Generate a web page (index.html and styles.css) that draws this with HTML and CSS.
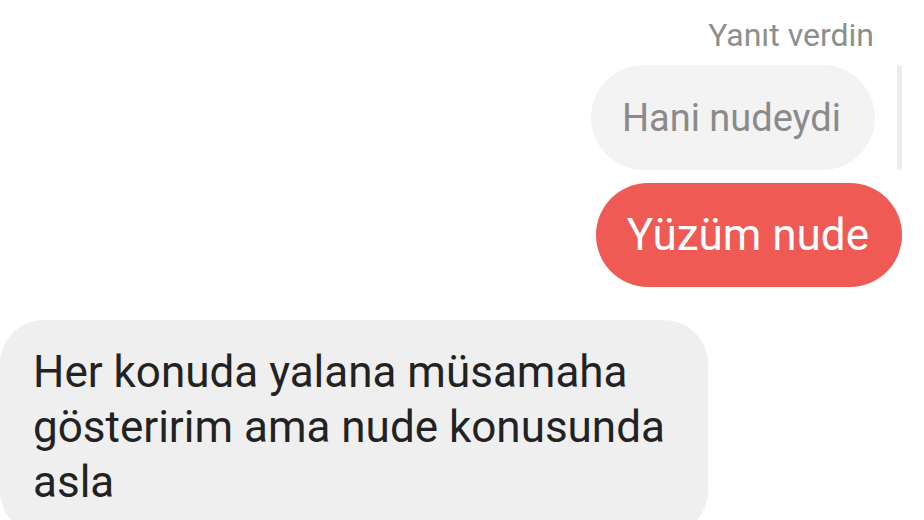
FILE: index.html
```html
<!DOCTYPE html>
<html lang="tr">
<head>
<meta charset="utf-8">
<title>Sohbet</title>
<link rel="stylesheet" href="styles.css">
</head>
<body>
<main class="thread">
  <div class="meta">Yanıt verdin</div>
  <div class="reply-row">
    <div class="quoted">Hani nudeydi</div>
    <div class="quote-bar"></div>
  </div>
  <div class="sent">Yüzüm nude</div>
  <div class="received">Her konuda yalana müsamaha gösteririm ama nude konusunda asla</div>
</main>
</body>
</html>
```

FILE: styles.css
```css
html, body {
  margin: 0;
  padding: 0;
  background: #ffffff;
  overflow: hidden;
  height: 520px;
}

body {
  font-family: Roboto, "Noto Sans", "Liberation Sans", sans-serif;
}

.thread {
  display: flex;
  flex-direction: column;
  width: 924px;
}

.meta {
  align-self: flex-end;
  margin: 19px 50px 0 0;
  font-size: 32px;
  line-height: 32px;
  color: #8e8e8e;
}

.reply-row {
  display: flex;
  justify-content: flex-end;
  align-items: stretch;
  gap: 22px;
  margin: 14px 22px 0 0;
}

.quoted {
  height: 105px;
  display: flex;
  align-items: center;
  padding: 0 34px 0 31px;
  border-radius: 53px;
  background: #f3f3f3;
  color: #8a8a8a;
  font-size: 38px;
}

.quote-bar {
  width: 5px;
  border-radius: 3px;
  background: #ececec;
}

.sent {
  align-self: flex-end;
  margin: 13px 22px 0 0;
  height: 104px;
  display: flex;
  align-items: center;
  padding: 0 33px 0 31px;
  border-radius: 52px;
  background: #ef5a55;
  color: #ffffff;
  font-size: 44px;
}

.received {
  align-self: flex-start;
  box-sizing: border-box;
  width: 708px;
  margin-top: 33px;
  padding: 25px 30px 25px 33px;
  border-radius: 44px;
  background: #efefef;
  color: #222222;
  font-size: 44px;
  line-height: 55px;
}
```
